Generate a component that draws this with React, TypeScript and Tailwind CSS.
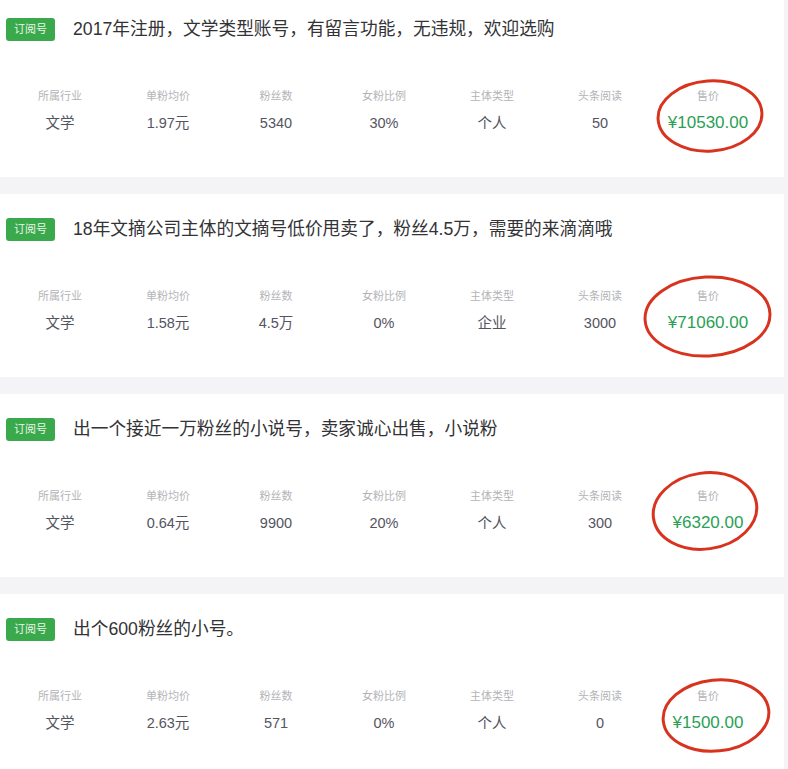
type Listing = {
  title: string;
  industry: string;
  unitPrice: string;
  fans: string;
  femaleRatio: string;
  entity: string;
  reads: string;
  price: string;
  ring: { box: string; w: number; h: number; tilt: number };
};

const listings: Listing[] = [
  {
    title: '2017年注册，文学类型账号，有留言功能，无违规，欢迎选购',
    industry: '文学',
    unitPrice: '1.97元',
    fans: '5340',
    femaleRatio: '30%',
    entity: '个人',
    reads: '50',
    price: '¥10530.00',
    ring: { box: 'left-[1px] top-[-10px] w-[110px] h-[76px]', w: 110, h: 76, tilt: -4 },
  },
  {
    title: '18年文摘公司主体的文摘号低价甩卖了，粉丝4.5万，需要的来滴滴哦',
    industry: '文学',
    unitPrice: '1.58元',
    fans: '4.5万',
    femaleRatio: '0%',
    entity: '企业',
    reads: '3000',
    price: '¥71060.00',
    ring: { box: 'left-[-12px] top-[-14px] w-[131px] h-[85px]', w: 131, h: 85, tilt: -3 },
  },
  {
    title: '出一个接近一万粉丝的小说号，卖家诚心出售，小说粉',
    industry: '文学',
    unitPrice: '0.64元',
    fans: '9900',
    femaleRatio: '20%',
    entity: '个人',
    reads: '300',
    price: '¥6320.00',
    ring: { box: 'left-[-4px] top-[-18px] w-[110px] h-[82px]', w: 110, h: 82, tilt: -8 },
  },
  {
    title: '出个600粉丝的小号。',
    industry: '文学',
    unitPrice: '2.63元',
    fans: '571',
    femaleRatio: '0%',
    entity: '个人',
    reads: '0',
    price: '¥1500.00',
    ring: { box: 'left-[6px] top-[-11px] w-[112px] h-[77px]', w: 112, h: 77, tilt: -6 },
  },
];

function Stat({ label, value }: { label: string; value: string }) {
  return (
    <div className="flex flex-col items-center">
      <div className="h-[16px] leading-[16px] text-[11px] text-[#b4b4b8]">{label}</div>
      <div className="mt-[7px] h-[24px] leading-[24px] text-[14.5px] text-[#55555f]">{value}</div>
    </div>
  );
}

function ListingCard({ item, first }: { item: Listing; first: boolean }) {
  const { ring } = item;
  return (
    <section className={`bg-white h-[183px] px-[6px] pt-[24px] ${first ? 'mt-[-6px]' : ''}`}>
      <div className="flex items-center h-[23px]">
        <span className="w-[49px] h-[23px] rounded-[3px] bg-[#3aa94b] text-[#eaf6ec] text-[11px] flex items-center justify-center">
          订阅号
        </span>
        <h2 className="ml-[18px] text-[17.7px] text-[#333336]">{item.title}</h2>
      </div>

      <div className="grid grid-cols-7 mt-[47px] w-[756px]">
        <Stat label="所属行业" value={item.industry} />
        <Stat label="单粉均价" value={item.unitPrice} />
        <Stat label="粉丝数" value={item.fans} />
        <Stat label="女粉比例" value={item.femaleRatio} />
        <Stat label="主体类型" value={item.entity} />
        <Stat label="头条阅读" value={item.reads} />
        <div className="relative flex flex-col items-center">
          <div className="h-[16px] leading-[16px] text-[11px] text-[#b4b4b8]">售价</div>
          <div className="mt-[7px] h-[24px] leading-[24px] text-[17px] text-[#2a9f55]">{item.price}</div>
          <svg
            className={`absolute ${ring.box}`}
            viewBox={`0 0 ${ring.w} ${ring.h}`}
            fill="none"
          >
            <ellipse
              cx={ring.w / 2}
              cy={ring.h / 2}
              rx={ring.w / 2 - 3}
              ry={ring.h / 2 - 3}
              stroke="#d8331f"
              strokeWidth="3"
              transform={`rotate(${ring.tilt} ${ring.w / 2} ${ring.h / 2})`}
            />
          </svg>
        </div>
      </div>
    </section>
  );
}

export default function App() {
  return (
    <div className="w-[788px] h-[769px] overflow-hidden bg-[#f4f4f6] font-['Liberation_Sans','Noto_Sans_CJK_SC',sans-serif]">
      <div className="flex flex-col gap-[17px] w-[784px]">
        {listings.map((item, i) => (
          <ListingCard key={i} item={item} first={i === 0} />
        ))}
      </div>
    </div>
  );
}
